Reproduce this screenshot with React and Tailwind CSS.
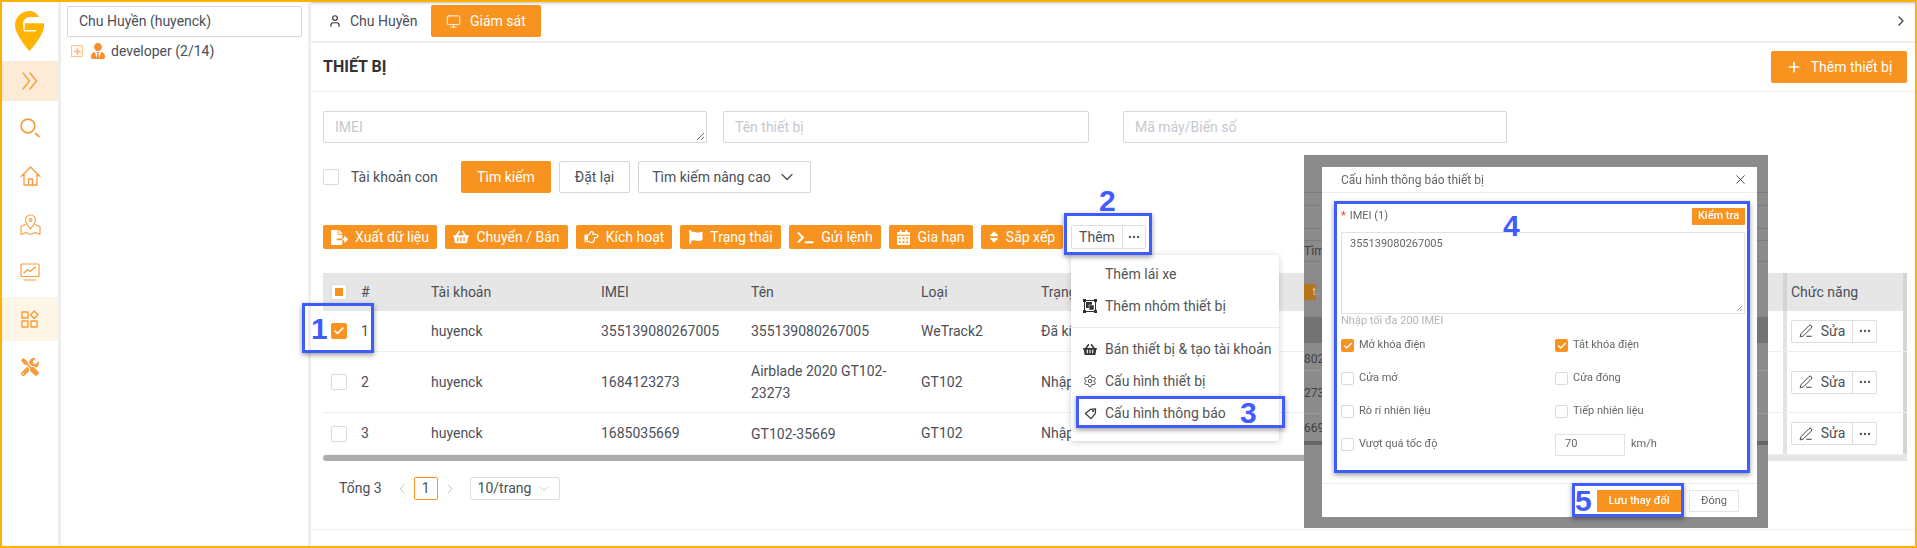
import React from 'react';
import { ChevronDown, ChevronLeft, ChevronRight, Plus, User, Monitor, Ellipsis, PenLine, Settings, X, Check } from 'lucide-react';
import { FaFileExport, FaShoppingBasket, FaRegHandPointRight, FaFlag, FaTerminal, FaCalendarAlt, FaSort, FaTools, FaUserTie } from 'react-icons/fa';

const Stroke = ({ className, children, w = 24, h = 24, sw = 1.6 }) => (
  <svg viewBox={`0 0 ${w} ${h}`} fill="none" stroke="currentColor" strokeWidth={sw} strokeLinecap="round" strokeLinejoin="round" className={className}>{children}</svg>
);

const Logo = () => (
  <svg viewBox="0 0 29 40" className="w-[29px] h-[40px]">
    <path d="M14.5 0C6 0 0 6.5 0 14.5 0 24 14.5 40 14.5 40S29 25 29 14V12H24V6C22 2 18 0 14.5 0Z" fill="#ffb400" />
    <path d="M8 13C8 9 11 6 15 6H22L29 6V12.5H10L9.5 19H21V20.5H9C8 18 8 15 8 13Z" fill="#fff" />
    <path d="M10 12.5H29V15C29 17 28 20 27 22H22V19H13Z" fill="#ffb400" />
  </svg>
);

const SideIcon = ({ className = 'h-12', children }) => (
  <div className={`flex items-center justify-center text-[#f89b3c] ${className}`}>{children}</div>
);

const Sidebar = () => (
  <aside className="w-[56px] shrink-0 flex flex-col border-r-[3px] border-[#eeeeee] box-content">
    <div className="h-[59px] flex items-start justify-center pt-[9px] pr-[1px]"><Logo /></div>
    <SideIcon className="h-10 bg-[#fdebd8]">
      <Stroke className="w-[16px] h-[18px]" w={16} h={18} sw={1.3}><path d="M1 1l6.5 8L1 17M8 1l6.5 8L8 17" /></Stroke>
    </SideIcon>
    <SideIcon className="h-12 mt-[3px]">
      <Stroke className="w-[20px] h-[20px]" w={20} h={20} sw={1.7}><circle cx="8" cy="8" r="6.8" /><path d="M15.5 15.5l3.5 3" /></Stroke>
    </SideIcon>
    <SideIcon>
      <Stroke className="w-[21px] h-[20px]" w={21} h={20} sw={1.3}><path d="M1 10.5L10.5 1 20 10.5M4 8.5V19h13V8.5M8.5 19v-6h4v6" /></Stroke>
    </SideIcon>
    <SideIcon>
      <Stroke className="w-[21px] h-[21px]" w={21} h={21} sw={1.1}><path d="M10.5 15C7.5 11 5.5 9 5.5 6a5 5 0 0 1 10 0C15.5 9 13.5 11 10.5 15Z" /><circle cx="10.5" cy="6" r="1.4" /><path d="M5.5 10.5L1 12.5V20.5l5-2 4.5 2 5-2 4.5 2v-8l-4.5-2" /></Stroke>
    </SideIcon>
    <SideIcon>
      <Stroke className="w-[20px] h-[18px]" w={20} h={18} sw={1.2}><rect x="1" y="1" width="18" height="12.5" rx="1" /><path d="M4 10l3.5-3.5 2.5 2L15.5 4M4 17h12" /></Stroke>
    </SideIcon>
    <SideIcon className="h-11 mt-[1px] bg-[#fdf5e6]">
      <Stroke className="w-[18px] h-[18px]" w={18} h={18} sw={1.4}><rect x="1" y="2" width="6" height="6" /><rect x="1" y="11" width="6" height="6" /><rect x="10" y="11" width="6" height="6" /><path d="M13.2 1l3.8 3.8-3.8 3.8-3.8-3.8Z" /></Stroke>
    </SideIcon>
    <SideIcon className="h-[52px]"><FaTools className="w-[18px] h-[18px]" /></SideIcon>
  </aside>
);

const TreePanel = () => (
  <section className="w-[235px] shrink-0 border-r-[3px] border-[#eeeeee] box-content pl-[6px] pr-[6px] pt-[4px] text-[14px] text-[#4b4f58]">
    <div className="h-[31px] w-[235px] border border-[#d5d5d5] rounded-[2px] pl-[11px] flex items-center">Chu Huyền (huyenck)</div>
    <div className="h-[24px] mt-[2px] flex items-center pl-[4px]">
      <span className="w-[12px] h-[12px] border border-[#fbc690] bg-[#fff8f0] flex items-center justify-center text-[#fbb66e]"><Plus className="w-[9px] h-[9px]" strokeWidth={4} /></span>
      <FaUserTie className="w-[14px] h-[16px] ml-[8px] text-[#f78f2e]" />
      <span className="ml-[6px]">developer (2/14)</span>
    </div>
  </section>
);

const Box = ({ checked, small, partial }) => {
  const size = small ? 'w-[13px] h-[13px]' : 'w-[16px] h-[16px]';
  if (partial) return <span className={`${size} shrink-0 border border-[#dcdee2] bg-white rounded-[2px] flex items-center justify-center`}><span className="w-[8px] h-[8px] bg-[#f7931e]" /></span>;
  if (checked) return <span className={`${size} shrink-0 bg-[#f7931e] rounded-[2px] flex items-center justify-center text-white`}><Check className={small ? 'w-[10px] h-[10px]' : 'w-[12px] h-[12px]'} strokeWidth={3.5} /></span>;
  return <span className={`${size} shrink-0 border border-[#d8dadf] bg-white rounded-[2px]`} />;
};

const Action = ({ icon, label, className }) => (
  <button className={`h-6 bg-[#f7931e] text-white rounded-[2px] flex items-center justify-center gap-[7px] text-[14px] ${className}`}>{icon}{label}</button>
);

const Toolbar = () => (
  <div className="mt-8 flex gap-2 h-6">
    <Action className="w-[114px]" label="Xuất dữ liệu" icon={<FaFileExport className="w-[17px] h-[15px]" />} />
    <Action className="w-[123px]" label="Chuyển / Bán" icon={<FaShoppingBasket className="w-[16px] h-[14px]" />} />
    <Action className="w-[96px]" label="Kích hoạt" icon={<FaRegHandPointRight className="w-[15px] h-[14px]" />} />
    <Action className="w-[101px]" label="Trạng thái" icon={<FaFlag className="w-[15px] h-[14px]" />} />
    <Action className="w-[92px]" label="Gửi lệnh" icon={<FaTerminal className="w-[17px] h-[13px]" />} />
    <Action className="w-[84px]" label="Gia hạn" icon={<FaCalendarAlt className="w-[13px] h-[15px]" />} />
    <Action className="w-[82px]" label="Sắp xếp" icon={<FaSort className="w-[10px] h-[14px]" />} />
    <div className="flex h-6 border border-[#dcdee2] rounded-[2px] text-[14px] text-[#4b4f58]">
      <span className="w-[51px] flex items-center justify-center border-r border-[#dcdee2]">Thêm</span>
      <span className="w-[22px] flex items-center justify-center"><Ellipsis className="w-[14px] h-[14px]" /></span>
    </div>
  </div>
);

const RowActions = () => (
  <div className="flex h-[23px] border border-[#dcdee2] rounded-[2px] text-[14px] text-[#4b4f58]">
    <span className="w-[61px] flex items-center justify-center gap-[8px] border-r border-[#dcdee2]"><PenLine className="w-[14px] h-[14px] text-[#333]" strokeWidth={1.6} />Sửa</span>
    <span className="w-[23px] flex items-center justify-center"><Ellipsis className="w-[14px] h-[14px]" /></span>
  </div>
);

const cols = 'grid grid-cols-[38px_70px_170px_150px_170px_120px_1fr_4px_116px_4px] items-stretch';
const Cell = ({ children, className = '' }) => <div className={`flex items-center ${className}`}>{children}</div>;
const rows = [
  { n: 1, imei: '355139080267005', name: '355139080267005', type: 'WeTrack2', st: 'Đã kích hoạt', h: 'h-[41px]', checked: true },
  { n: 2, imei: '1684123273', name: 'Airblade 2020 GT102-23273', type: 'GT102', st: 'Nhập kho', h: 'h-[61px]' },
  { n: 3, imei: '1685035669', name: 'GT102-35669', type: 'GT102', st: 'Nhập kho', h: 'h-[42px]' },
];

const DeviceTable = () => (
  <div className="mt-6 text-[14px] text-[#4b4f58]">
    <div className={`${cols} h-[38px] bg-[#e6e6e6]`}>
      <Cell className="pl-2"><Box partial /></Cell>
      <Cell>#</Cell><Cell>Tài khoản</Cell><Cell>IMEI</Cell><Cell>Tên</Cell><Cell>Loại</Cell><Cell>Trạng thái</Cell>
      <div className="bg-[#d4d4d4]" /><Cell className="pl-1">Chức năng</Cell><div className="bg-[#d4d4d4]" />
    </div>
    {rows.map((r) => (
      <div key={r.n} className={`${cols} ${r.h} border-b border-[#eeeeee] bg-white`}>
        <Cell className="pl-2"><Box checked={r.checked} /></Cell>
        <Cell>{r.n}</Cell><Cell>huyenck</Cell><Cell>{r.imei}</Cell>
        <Cell className="pr-6 leading-[22px]">{r.name}</Cell><Cell>{r.type}</Cell><Cell>{r.st}</Cell>
        <div className="bg-[#e2e2e2]" /><Cell className="pl-1"><RowActions /></Cell><div className="bg-[#d4d4d4]" />
      </div>
    ))}
    <div className="flex h-[6px]">
      <div className="flex-1 bg-[#adadad] rounded-l-[3px]" />
      <div className="w-[139px] bg-[#e6e6e6]" />
    </div>
  </div>
);

const Pagination = () => (
  <div className="mt-4 h-[23px] flex items-center pl-4 text-[14px] text-[#4b4f58]">
    <span>Tổng 3</span>
    <ChevronLeft className="w-[16px] h-[16px] ml-[12px] text-[#c5c8ce]" strokeWidth={1.5} />
    <span className="ml-[4px] w-[24px] h-[23px] border border-[#f7931e] rounded-[2px] flex items-center justify-center">1</span>
    <ChevronRight className="w-[16px] h-[16px] ml-[4px] text-[#c5c8ce]" strokeWidth={1.5} />
    <span className="ml-[12px] w-[90px] h-[23px] border border-[#dcdee2] rounded-[2px] flex items-center pl-[7px] gap-[6px]">10/trang<ChevronDown className="w-[14px] h-[14px] text-[#c5c8ce]" strokeWidth={1.5} /></span>
  </div>
);

const Field = ({ className, label, resize }) => (
  <div className={`relative h-8 border border-[#d5d5d5] rounded-[2px] px-[11px] flex items-center text-[14px] text-[#c5c8ce] ${className}`}>
    {label}
    {resize && <svg viewBox="0 0 9 9" className="absolute right-[1px] bottom-[1px] w-[9px] h-[9px]" stroke="#666" fill="none"><path d="M1 8l7-7M5 8l3-3" /></svg>}
  </div>
);

const Main = () => (
  <main className="flex-1 min-w-0 flex flex-col">
    <header className="h-[41px] shrink-0 border-b-2 border-[#eeeeee] flex pt-[3px] shadow-[inset_0_3px_3px_-2px_#bbbbbb] text-[14px]">
      <div className="w-[120px] h-[32px] flex items-center pl-[17px] gap-[8px] text-[#4b4f58]"><User className="w-[14px] h-[14px] text-[#333]" />Chu Huyền</div>
      <div className="w-[110px] h-[32px] bg-[#f7931e] rounded-[2px] text-white flex items-center pl-[15px] gap-[9px]"><Monitor className="w-[15px] h-[15px]" strokeWidth={1.5} />Giám sát</div>
      <div className="flex-1 flex justify-end items-start pt-[8px] pr-[6px]"><ChevronRight className="w-[16px] h-[16px] text-[#444]" /></div>
    </header>
    <div className="h-[487px] shrink-0 border-b border-[#eeeeee] flex flex-col">
      <div className="h-[49px] shrink-0 border-b border-[#eeeeee] pl-3 pr-2 flex items-center justify-between">
        <h1 className="text-[16px] font-bold text-[#333]">THIẾT BỊ</h1>
        <button className="w-[136px] h-8 bg-[#f7931e] rounded-[2px] text-white text-[14px] flex items-center justify-center gap-[9px]"><Plus className="w-[16px] h-[16px]" strokeWidth={2.5} />Thêm thiết bị</button>
      </div>
      <div className="pl-3 pr-2">
        <div className="mt-[19px] flex">
          <Field className="w-[384px]" label="IMEI" resize />
          <Field className="w-[366px] ml-4" label="Tên thiết bị" />
          <Field className="w-[384px] ml-[34px]" label="Mã máy/Biến số" />
        </div>
        <div className="mt-[18px] h-8 flex items-center text-[14px] text-[#4b4f58]">
          <Box />
          <span className="ml-3 w-[110px]">Tài khoản con</span>
          <button className="w-[90px] h-8 bg-[#f7931e] text-white rounded-[2px]">Tìm kiếm</button>
          <button className="ml-2 w-[71px] h-8 border border-[#d5d5d5] rounded-[2px]">Đặt lại</button>
          <button className="ml-2 w-[173px] h-8 border border-[#d5d5d5] rounded-[2px] flex items-center justify-center gap-[6px]">Tìm kiếm nâng cao<ChevronDown className="w-[20px] h-[20px]" strokeWidth={1.5} /></button>
        </div>
        <Toolbar />
        <DeviceTable />
        <Pagination />
      </div>
    </div>
  </main>
);

const MenuItem = ({ icon, label }) => (
  <div className="h-8 flex items-center pl-[12px] gap-[8px] text-[14px] text-[#555]">
    <span className="w-[14px] h-[14px] flex items-center justify-center text-[#333]">{icon}</span>{label}
  </div>
);

const DropMenu = () => (
  <div className="absolute left-[1071px] top-[255px] w-[208px] h-[186px] bg-white rounded-[2px] shadow-[0_1px_6px_rgba(0,0,0,0.2)] pt-[3px]">
    <MenuItem label="Thêm lái xe" />
    <MenuItem label="Thêm nhóm thiết bị" icon={
      <svg viewBox="0 0 14 14" className="w-[14px] h-[14px]" fill="none" stroke="currentColor"><rect x="1.5" y="1.5" width="11" height="11" /><rect x="3.5" y="3.5" width="5" height="5" fill="currentColor" /><rect x="6" y="6" width="5" height="5" fill="currentColor" stroke="#fff" strokeWidth="0.5" /><path d="M0 0h3v3H0zM11 0h3v3h-3zM0 11h3v3H0zM11 11h3v3h-3z" fill="currentColor" stroke="none" /></svg>
    } />
    <div className="my-[5px] h-px bg-[#e8eaec]" />
    <MenuItem label="Bán thiết bị & tạo tài khoản" icon={<FaShoppingBasket className="w-[14px] h-[13px]" />} />
    <MenuItem label="Cấu hình thiết bị" icon={<Settings className="w-[14px] h-[14px]" strokeWidth={1.5} />} />
    <MenuItem label="Cấu hình thông báo" icon={
      <svg viewBox="0 0 14 14" className="w-[13px] h-[13px]" fill="none" stroke="currentColor" strokeWidth="1.3" strokeLinejoin="round"><path d="M1.5 7L7 2.5l5.5-.5-.5 5.5L7.5 12.5Z" /><circle cx="9.7" cy="4.4" r="0.5" /></svg>
    } />
  </div>
);

const ModalCheck = ({ checked, label }) => (
  <label className="flex items-center gap-[5px] text-[11px] text-[#666]"><Box small checked={checked} />{label}</label>
);

const Modal = () => (
  <div className="absolute left-[1304px] top-[155px] w-[464px] h-[373px] bg-[#8b8b8b] overflow-hidden">
    <div className="absolute left-0 top-[37px] w-full h-px bg-[#7c7c7c]" />
    <div className="absolute left-0 top-[50px] w-full h-px bg-[#7c7c7c]" />
    <div className="absolute left-0 top-[73px] w-full h-px bg-[#7c7c7c]" />
    <div className="absolute left-0 top-[85px] w-full h-px bg-[#7c7c7c]" />
    <div className="absolute left-0 top-[106px] w-full h-px bg-[#7c7c7c]" />
    <div className="absolute left-0 top-[162px] w-full h-[26px] bg-[#737373]" />
    <div className="absolute left-0 top-[215px] w-full h-px bg-[#9a9a9a]" />
    <div className="absolute left-0 top-[258px] w-full h-px bg-[#9a9a9a]" />
    <div className="absolute left-0 top-[286px] w-full h-[4px] bg-[#666666]" />
    <span className="absolute left-0 top-[87px] text-[12px] text-[#3f3f3f]">Tìm</span>
    <span className="absolute left-0 top-[129px] w-[12px] h-[16px] bg-[#b8731e] rounded-r-[1px] text-[11px] leading-[16px] text-[#e0c39a] text-right">t</span>
    <span className="absolute left-0 top-[195px] text-[12px] text-[#3f3f3f]">802</span>
    <span className="absolute left-0 top-[229px] text-[12px] text-[#3f3f3f]">273</span>
    <span className="absolute left-0 top-[264px] text-[12px] text-[#3f3f3f]">669</span>

    <div className="absolute left-[18px] top-[12px] w-[435px] h-[350px] bg-white flex flex-col text-[#666] blur-[0.3px]">
      <div className="h-[26px] shrink-0 border-b border-[#eeeeee] pl-[19px] pr-[9px] flex items-center justify-between text-[12px]">
        <span>Cấu hình thông báo thiết bị</span>
        <X className="w-[15px] h-[15px] text-[#444]" strokeWidth={1.5} />
      </div>
      <div className="flex-1 px-[19px] pr-[12px] pt-[15px]">
        <div className="h-[17px] flex items-center justify-between text-[11px]">
          <span><span className="text-[#ed4014] mr-[4px]">*</span>IMEI (1)</span>
          <span className="w-[53px] h-[17px] bg-[#f7931e] text-white rounded-[1px] flex items-center justify-center font-medium">Kiểm tra</span>
        </div>
        <div className="relative mt-[7px] h-[82px] border border-[#e2e2e2] pl-[8px] pt-[3px] text-[11px]">
          355139080267005
          <svg viewBox="0 0 7 7" className="absolute right-[1px] bottom-[1px] w-[7px] h-[7px]" stroke="#999" fill="none"><path d="M1 6l5-5M4 6l2-2" /></svg>
        </div>
        <div className="h-[15px] text-[11px] leading-[14px] text-[#b5b5b5]">Nhập tối đa 200 IMEI</div>
        <div className="grid grid-cols-[214px_1fr] auto-rows-[33px] items-center">
          <ModalCheck checked label="Mở khóa điện" />
          <ModalCheck checked label="Tắt khóa điện" />
          <ModalCheck label="Cửa mở" />
          <ModalCheck label="Cửa đóng" />
          <ModalCheck label="Rò rí nhiên liệu" />
          <ModalCheck label="Tiếp nhiên liệu" />
          <ModalCheck label="Vượt quá tốc độ" />
          <div className="flex items-center text-[11px]">
            <span className="w-[70px] h-[22px] border border-[#e2e2e2] pl-[9px] flex items-center">70</span>
            <span className="ml-[6px]">km/h</span>
          </div>
        </div>
      </div>
      <div className="h-[34px] shrink-0 border-t border-[#eeeeee] flex items-start justify-end gap-[8px] pr-[18px] pt-[6px] text-[11px]">
        <button className="w-[84px] h-[22px] bg-[#f7931e] text-white font-medium">Lưu thay đổi</button>
        <button className="w-[50px] h-[22px] border border-[#e6e6e6] text-[#666]">Đóng</button>
      </div>
    </div>
  </div>
);

const Mark = ({ className }) => <div className={`absolute border-[3px] border-[#3f5cff] shadow-[0_2px_5px_rgba(0,0,0,0.4)] ${className}`} />;
const Num = ({ className, children }) => (
  <span className={`absolute font-['Liberation_Sans',sans-serif] font-bold text-[30px] leading-none text-[#3f5cff] ${className}`}>{children}</span>
);

export default function App() {
  return (
    <div className="relative w-[1917px] h-[548px] border-2 border-[#ffb000] bg-white flex overflow-hidden font-['Roboto',sans-serif]">
      <Sidebar />
      <TreePanel />
      <Main />
      <div className="absolute -left-0.5 -top-0.5">
        <DropMenu />
        <Modal />
        <Mark className="left-[302px] top-[303px] w-[72px] h-[50px]" />
        <Num className="left-[311px] top-[314px]">1</Num>
        <Mark className="left-[1064px] top-[213px] w-[88px] h-[42px]" />
        <Num className="left-[1099px] top-[186px]">2</Num>
        <Mark className="left-[1076px] top-[396px] w-[209px] h-[32px]" />
        <Num className="left-[1240px] top-[398px]">3</Num>
        <Mark className="left-[1334px] top-[201px] w-[416px] h-[272px]" />
        <Num className="left-[1503px] top-[211px]">4</Num>
        <Mark className="left-[1572px] top-[483px] w-[112px] h-[34px]" />
        <Num className="left-[1575px] top-[486px]">5</Num>
      </div>
    </div>
  );
}
